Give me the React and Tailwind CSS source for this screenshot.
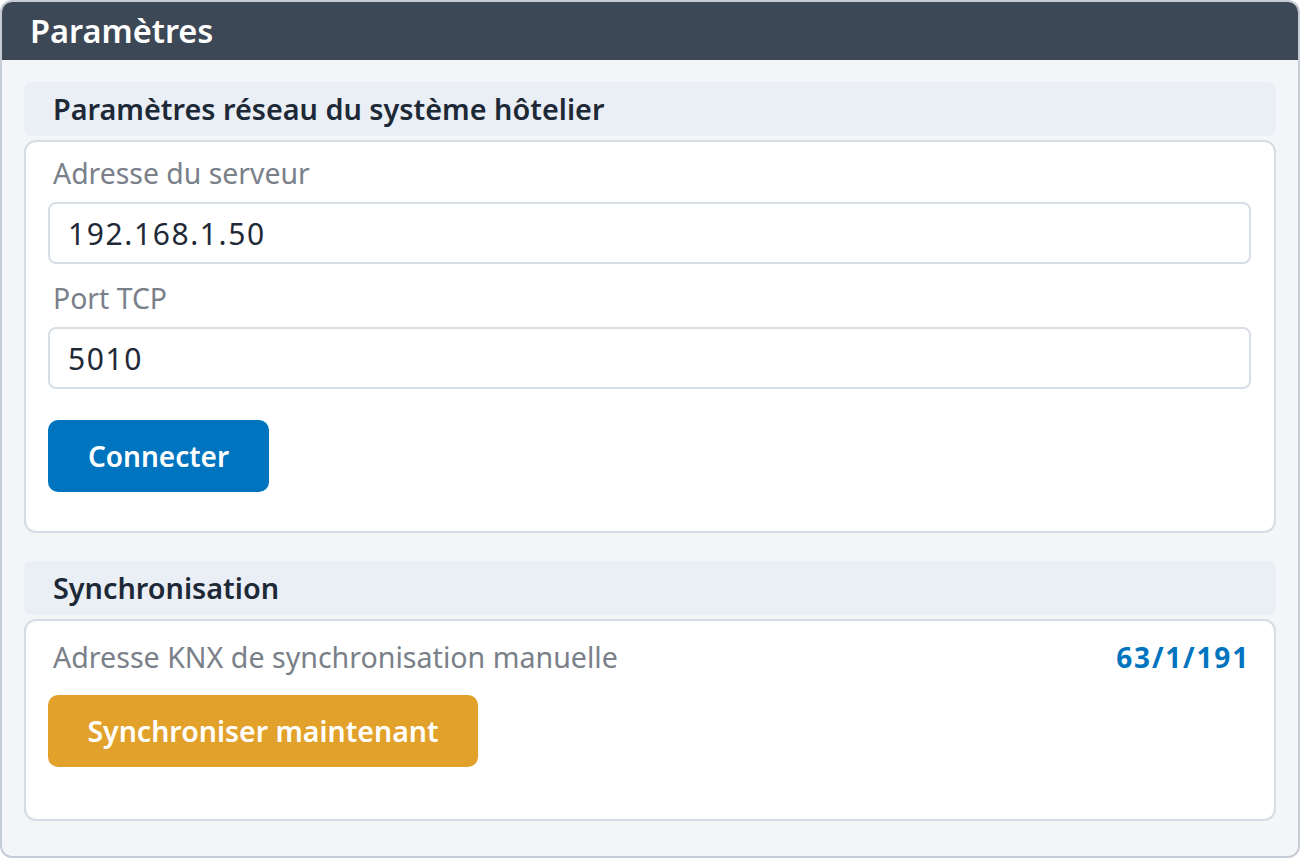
import React from 'react';

const font = { fontFamily: '"Noto Sans", "Open Sans", sans-serif' };

const SectionTitle = ({ children, className = '' }) => (
    <div className={`h-[54px] rounded-[8px] bg-[#eaeff6] px-[29px] flex items-center ${className}`}>
        <h3 className="text-[28.8px] font-semibold text-[#1e2937]">{children}</h3>
    </div>
);

const Field = ({ label, value, className = '' }) => (
    <div className={className}>
        <label className="block h-[34px] leading-[34px] pl-[5px] pt-[2px] text-[28.4px] text-[#7a8089]">{label}</label>
        <input
            readOnly
            value={value}
            className="mt-[14px] w-full h-[62px] rounded-[8px] border-2 border-[#d8dee6] bg-white px-[18px] text-[30px] tracking-[1.6px] text-[#1f2937] outline-none"
            style={font}
        />
    </div>
);

export default function App() {
    return (
        <div className="w-[1300px] h-[858px] bg-white" style={font}>
            <div className="w-[1300px] h-[858px] border-2 border-[#c6ccd5] rounded-[12px] overflow-hidden bg-[#f3f5f8] flex flex-col">
                <div className="h-[58px] bg-[#3d4856] px-[28px] flex items-center shrink-0">
                    <h2 className="text-[32.5px] font-semibold text-white">Paramètres</h2>
                </div>
                <div className="px-[22px] pt-[22px]">
                    <SectionTitle>Paramètres réseau du système hôtelier</SectionTitle>
                    <div className="mt-[4px] bg-white border-2 border-[#d6dce4] rounded-[12px] pl-[22px] pr-[23px] pt-[12px] pb-[39px]">
                        <Field label="Adresse du serveur" value="192.168.1.50" />
                        <Field label="Port TCP" value="5010" className="mt-[15px]" />
                        <button className="mt-[31px] h-[72px] w-[221px] rounded-[10px] bg-[#0074be] text-white text-[28px] font-semibold">
                            Connecter
                        </button>
                    </div>

                    <SectionTitle className="mt-[28px]">Synchronisation</SectionTitle>
                    <div className="mt-[4px] bg-white border-2 border-[#d6dce4] rounded-[12px] pl-[22px] pr-[24px] pt-[19px] pb-[52px]">
                        <div className="flex items-center justify-between h-[34px]">
                            <span className="pl-[5px] text-[28.6px] text-[#7a8089]">Adresse KNX de synchronisation manuelle</span>
                            <span className="text-[28px] font-bold tracking-[1.8px] text-[#0074be]">63/1/191</span>
                        </div>
                        <button className="mt-[21px] h-[72px] w-[430px] rounded-[10px] bg-[#e2a12a] text-white text-[28.5px] font-semibold">
                            Synchroniser maintenant
                        </button>
                    </div>
                </div>
            </div>
        </div>
    );
}
